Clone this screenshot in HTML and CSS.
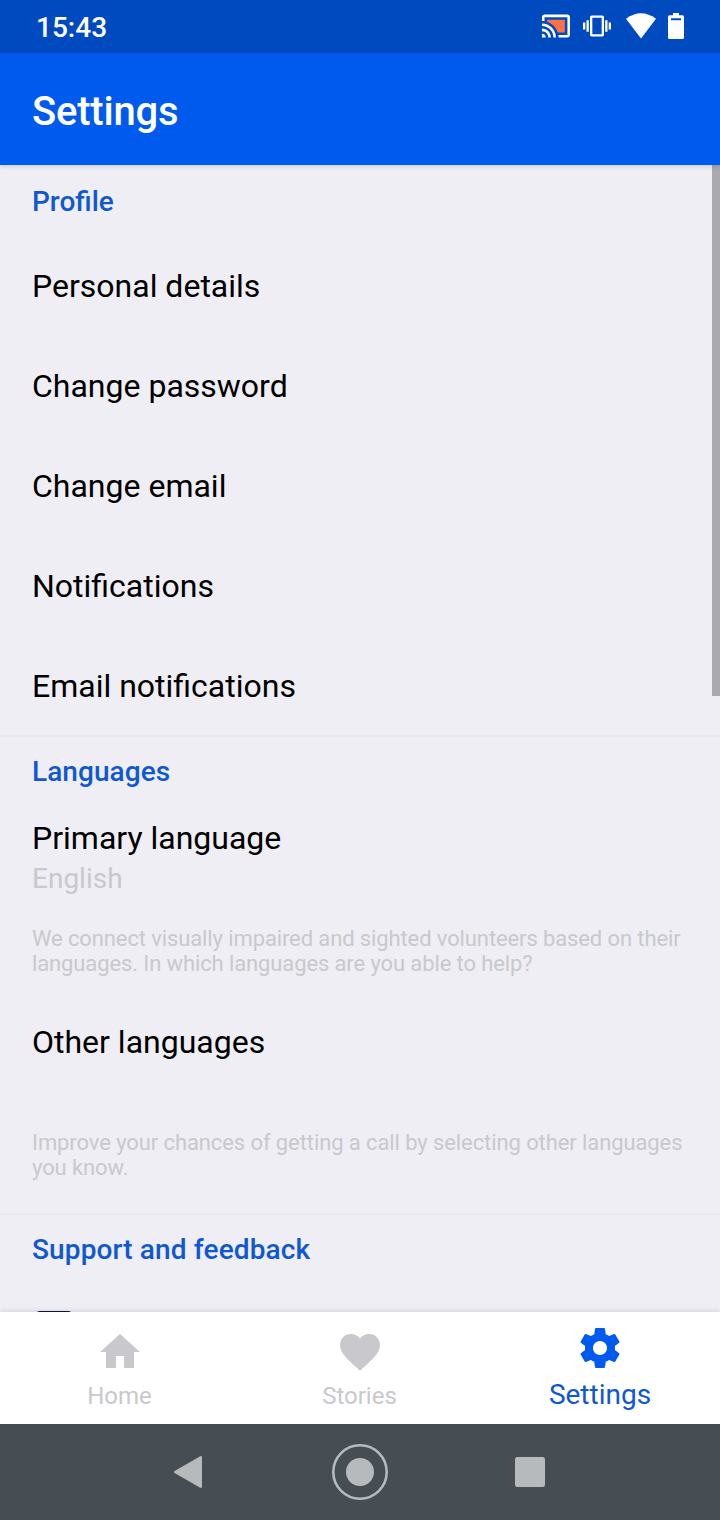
FILE: index.html
```
<!DOCTYPE html>
<html lang="en">
<head>
<meta charset="utf-8">
<title>Settings</title>
<link rel="stylesheet" href="styles.css">
</head>
<body>
<div class="screen">
  <header class="status">
    <span class="clock">15:43</span>
    <svg class="status-icons" width="144" height="30" viewBox="541 11 144 30" fill="#fff">
      <g transform="translate(540.7 10.8) scale(1.272)">
        <path fill="#ff7043" d="M5 7v1.63c3.96 1.28 7.09 4.41 8.37 8.37H19V7z"/>
        <path d="M21 3H3c-1.100 0-2 .9-2 2v3h2V5h18v14h-7v2h7c1.100 0 2-.9 2-2V5c0-1.100-.9-2-2-2zM1 18v3h3c0-1.660-1.340-3-3-3zm0-4v2c2.760 0 5 2.240 5 5h2c0-3.870-3.130-7-7-7zm0-4v2c4.970 0 9 4.030 9 9h2c0-6.080-4.930-11-11-11z"/>
      </g>
      <g transform="translate(583 12) scale(1.167)">
        <path d="M0 15h2V9H0v6zm3 2h2V7H3v10zm19-8v6h2V9h-2zm-3 8h2V7h-2v10zM16.500 3h-9C6.670 3 6 3.670 6 4.500v15c0 .83.67 1.500 1.500 1.500h9c.83 0 1.500-.67 1.500-1.500v-15c0-.83-.67-1.500-1.500-1.500zM16 19H8V5h8v14z"/>
      </g>
      <path d="M626 18.700Q641 7.600 656 18.700L641 38.500Z"/>
      <path fill-rule="evenodd" d="M673 13h6v2.300h3.500q1.500 0 1.500 1.500V37.500q0 1.500-1.500 1.500h-13q-1.500 0-1.500-1.500V16.800q0-1.500 1.500-1.500h3.500zM671 18.200v2h10v-2z"/>
    </svg>
  </header>
  <div class="appbar"><h1 class="title">Settings</h1></div>
  <main class="content">
    <section class="group">
      <h2 class="heading">Profile</h2>
      <div class="item">Personal details</div>
      <div class="item">Change password</div>
      <div class="item">Change email</div>
      <div class="item">Notifications</div>
      <div class="item">Email notifications</div>
    </section>
    <section class="group divided">
      <h2 class="heading">Languages</h2>
      <div class="pref"><div class="label">Primary language</div><div class="value">English</div></div>
      <p class="hint">We connect visually impaired and sighted volunteers based on their<br>languages. In which languages are you able to help?</p>
      <div class="item other">Other languages</div>
      <p class="hint hint-last">Improve your chances of getting a call by selecting other languages<br>you know.</p>
    </section>
    <section class="group divided">
      <h2 class="heading support">Support and feedback</h2>
      <div class="next-icon"></div>
    </section>
    <div class="scrollbar"></div>
  </main>
  <nav class="tabs">
    <div class="tab">
      <svg class="tab-icon" viewBox="0 0 24 24"><path d="M10 20v-6h4v6h5v-8h3L12 3 2 12h3v8z"/></svg>
      <span class="tab-label">Home</span>
    </div>
    <div class="tab">
      <svg class="tab-icon" viewBox="0 0 24 24"><path d="M12 21.350l-1.450-1.320C5.400 15.360 2 12.280 2 8.500 2 5.420 4.420 3 7.500 3c1.740 0 3.410.81 4.500 2.090C13.090 3.810 14.760 3 16.500 3 19.580 3 22 5.420 22 8.500c0 3.780-3.400 6.860-8.550 11.540L12 21.350z"/></svg>
      <span class="tab-label">Stories</span>
    </div>
    <div class="tab active">
      <svg class="tab-icon" viewBox="0 0 24 24"><path d="M19.430 12.980c.04-.32.07-.64.07-.98s-.03-.66-.07-.98l2.110-1.650c.19-.15.24-.42.12-.64l-2-3.460c-.12-.22-.39-.3-.61-.22l-2.490 1c-.52-.4-1.080-.73-1.690-.98l-.38-2.650C14.460 2.180 14.250 2 14 2h-4c-.25 0-.46.18-.49.42l-.38 2.650c-.61.25-1.170.59-1.690.98l-2.490-1c-.23-.09-.49 0-.61.22l-2 3.460c-.13.22-.07.49.12.64l2.110 1.650c-.04.32-.07.65-.07.98s.03.66.07.98l-2.110 1.650c-.19.15-.24.42-.12.64l2 3.460c.12.22.39.3.61.22l2.490-1c.52.4 1.080.73 1.690.98l.38 2.650c.03.24.24.42.49.42h4c.25 0 .46-.18.49-.42l.38-2.650c.61-.25 1.170-.59 1.690-.98l2.490 1c.23.09.49 0 .61-.22l2-3.460c.12-.22.07-.49-.12-.64l-2.110-1.650zM12 15.500c-1.930 0-3.500-1.570-3.500-3.500s1.570-3.500 3.500-3.500 3.500 1.570 3.500 3.500-1.570 3.500-3.500 3.500z"/></svg>
      <span class="tab-label">Settings</span>
    </div>
  </nav>
  <footer class="navbar">
    <svg width="720" height="96" viewBox="0 0 720 96" fill="#b7babc" stroke="#b7babc">
      <path d="M175.200 48L200.800 33.200V62.800Z" stroke-width="2.400" stroke-linejoin="round"/>
      <circle cx="360" cy="48" r="14" stroke="none"/>
      <circle cx="360" cy="48" r="26.700" fill="none" stroke-width="2.600"/>
      <rect x="515" y="33" width="30" height="30" rx="2.500" stroke="none"/>
    </svg>
  </footer>
</div>
</body>
</html>
```
FILE: styles.css
```
* { box-sizing: border-box; }
body { margin: 0; font-family: Roboto, "Liberation Sans", sans-serif; background: #efeef4; }
h1, h2, p { margin: 0; font-weight: 500; }
.screen { width: 720px; height: 1520px; display: flex; flex-direction: column; overflow: hidden; }
.status { height: 53px; flex: none; background: #004abf; display: flex; justify-content: space-between; align-items: center; padding: 0 35px 0 36px; }
.clock { color: #fff; font-size: 28px; font-weight: 500; line-height: 54px; padding-top: 2px; }
.status-icons { margin-top: -1px; }
.appbar { height: 112px; flex: none; background: #005aee; display: flex; align-items: center; padding: 5px 32px 0; box-shadow: 0 1px 5px rgba(0,0,40,.18); position: relative; z-index: 1; }
.title { color: #fff; font-size: 40px; line-height: 48px; letter-spacing: -.22px; }
.content { height: 1147px; flex: none; overflow: hidden; position: relative; }
.scrollbar { position: absolute; top: 0; right: 0; width: 8px; height: 531px; background: #aaa9ae; }
.heading { height: 71px; padding: 0 32px; color: #1058d0; font-size: 28px; line-height: 73px; }
.item { height: 100px; padding: 0 32px; font-size: 32px; line-height: 101px; color: #000; }
.divided { border-top: 2px solid #e9e8ee; margin-top: -1px; }
.divided .heading { height: 68px; line-height: 70px; letter-spacing: .07px; }
.divided .support { letter-spacing: .14px; }
.pref { padding: 13px 32px 0; height: 109px; }
.label { font-size: 32px; line-height: 40px; }
.value { font-size: 28px; line-height: 40px; padding-top: 1px; color: #c8c8cd; }
.hint { padding: 12px 32px 0; height: 78px; font-size: 22px; line-height: 25px; font-weight: 400; letter-spacing: -.115px; color: #c8c8cd; white-space: nowrap; }
.hint-last { height: 122px; padding-top: 38px; letter-spacing: -.095px; }
.next-icon { width: 36px; height: 32px; margin: 28px 0 0 36px; background: #0c1738; border-radius: 4px; }
.tabs { height: 112px; flex: none; background: #fff; display: flex; box-shadow: 0 -1px 5px rgba(0,0,40,.12); position: relative; }
.tab { flex: 1; display: flex; flex-direction: column; align-items: center; padding-top: 16px; color: #c8c8cd; }
.tab-icon { width: 48px; height: 48px; fill: currentColor; }
.tab-label { font-size: 24px; line-height: 28px; margin-top: 6px; padding-right: 1px; }
.active { padding-top: 12px; color: #005aee; }
.active .tab-label { color: #1058d0; font-size: 28px; line-height: 32px; margin-top: 7px; padding: 0; }
.navbar { height: 96px; flex: none; background: #464d53; }
.navbar svg { display: block; }
```
